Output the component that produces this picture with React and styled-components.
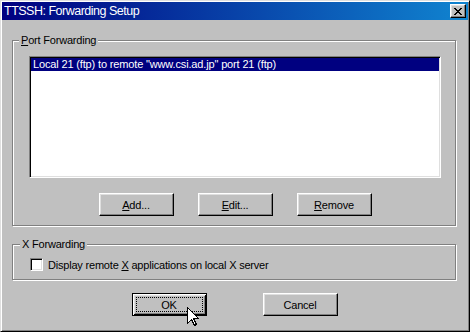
import React from 'react'
import styled, { createGlobalStyle } from 'styled-components'

const colors = {
  face: '#c0c0c0',
  light: '#dfdfdf',
  white: '#ffffff',
  shadow: '#808080',
  dark: '#000000',
  navy: '#000080',
  titleEnd: '#1084d0'
}

const GlobalStyle = createGlobalStyle`
  html, body {
    margin: 0;
    padding: 0;
    background: ${colors.face};
  }
  body {
    font-family: "Liberation Sans", Arial, sans-serif;
    font-size: 11px;
    color: #000;
  }
`

const Window = styled.div`
  position: relative;
  width: 470px;
  height: 332px;
  box-sizing: border-box;
  padding: 1px;
  background: ${colors.face};
  border: 1px solid;
  border-color: ${colors.light} ${colors.dark} ${colors.dark} ${colors.light};
  box-shadow: inset 1px 1px ${colors.white}, inset -1px -1px ${colors.shadow};
  display: flex;
  flex-direction: column;
`

const TitleBar = styled.div`
  height: 18px;
  display: flex;
  align-items: center;
  justify-content: space-between;
  padding: 0 2px 0 2px;
  background: linear-gradient(90deg, ${colors.navy}, ${colors.titleEnd});
`

const Title = styled.span`
  color: ${colors.white};
  font-size: 12.5px;
  letter-spacing: -0.5px;
  line-height: 18px;
  white-space: nowrap;
`

const CloseButton = styled.div`
  width: 16px;
  height: 14px;
  box-sizing: border-box;
  background: ${colors.face};
  border: 1px solid;
  border-color: ${colors.white} ${colors.dark} ${colors.dark} ${colors.white};
  box-shadow: inset -1px -1px ${colors.shadow}, inset 1px 1px ${colors.light};
  display: flex;
  align-items: center;
  justify-content: center;
`

const Body = styled.div`
  flex: 1;
  display: flex;
  flex-direction: column;
  padding: 0 12px 0 10px;
`

const Group = styled.fieldset`
  margin: ${({ top }) => top}px 0 0 0;
  padding: ${({ pad }) => pad};
  min-width: 0;
  border: 1px solid ${colors.shadow};
  box-shadow: inset 1px 1px ${colors.white}, 1px 1px ${colors.white};
`

const GroupLabel = styled.legend`
  margin-left: -10px;
  padding: 0 2px;
  font-size: 11px;
  line-height: 13px;
  letter-spacing: -0.2px;
  background: ${colors.face};
`

const ListBox = styled.div`
  height: 122px;
  box-sizing: border-box;
  background: ${colors.white};
  border: 1px solid;
  border-color: ${colors.shadow} ${colors.white} ${colors.white} ${colors.shadow};
  box-shadow: inset 1px 1px ${colors.dark}, inset -1px -1px ${colors.light};
  padding: 1px;
`

const ListItem = styled.div`
  height: 13px;
  line-height: 13px;
  padding-left: 2px;
  letter-spacing: -0.15px;
  white-space: nowrap;
  ${({ selected }) =>
    selected &&
    `
    background: ${colors.navy};
    color: ${colors.white};
  `}
`

const ButtonRow = styled.div`
  display: flex;
  justify-content: center;
  gap: ${({ gap }) => gap}px;
  margin-top: ${({ top }) => top}px;
  padding-left: ${({ shift }) => shift || 0}px;
`

const Button = styled.div`
  position: relative;
  width: 75px;
  height: 23px;
  box-sizing: border-box;
  display: flex;
  align-items: center;
  justify-content: center;
  background: ${colors.face};
  font-size: 11px;
  letter-spacing: -0.2px;
  border: 1px solid;
  border-color: ${colors.white} ${colors.dark} ${colors.dark} ${colors.white};
  box-shadow: inset -1px -1px ${colors.shadow}, inset 1px 1px ${colors.light};
  ${({ isDefault }) =>
    isDefault &&
    `
    border-color: ${colors.dark};
    box-shadow: inset 1px 1px ${colors.white}, inset -1px -1px ${colors.dark},
      inset 2px 2px ${colors.light}, inset -2px -2px ${colors.shadow};
  `}
`

const FocusRing = styled.span`
  position: absolute;
  inset: 3px;
  border: 1px dotted ${colors.dark};
`

const Mnemonic = styled.span`
  text-decoration: underline;
`

const CheckRow = styled.label`
  display: flex;
  align-items: center;
  gap: 5px;
  height: 13px;
  letter-spacing: -0.2px;
  white-space: nowrap;
`

const CheckBox = styled.span`
  width: 13px;
  height: 13px;
  box-sizing: border-box;
  background: ${colors.white};
  border: 1px solid;
  border-color: ${colors.shadow} ${colors.white} ${colors.white} ${colors.shadow};
  box-shadow: inset 1px 1px ${colors.dark}, inset -1px -1px ${colors.light};
`

const Cursor = styled.svg`
  position: absolute;
  left: 186px;
  top: 306px;
`

const App = () => (
  <>
    <GlobalStyle />
    <Window>
      <TitleBar>
        <Title>TTSSH: Forwarding Setup</Title>
        <CloseButton>
          <svg width="8" height="7" viewBox="0 0 8 7" shapeRendering="crispEdges">
            <path
              d="M0 0h2v1h-2zM6 0h2v1h-2zM1 1h2v1h-2zM5 1h2v1h-2zM2 2h4v1h-4zM3 3h2v1h-2zM2 4h4v1h-4zM1 5h2v1h-2zM5 5h2v1h-2zM0 6h2v1h-2zM6 6h2v1h-2z"
              fill="#000"
            />
          </svg>
        </CloseButton>
      </TitleBar>
      <Body>
        <Group top={14} pad="9px 14px 9px 16px">
          <GroupLabel>
            <Mnemonic>P</Mnemonic>ort Forwarding
          </GroupLabel>
          <ListBox>
            <ListItem selected>
              Local 21 (ftp) to remote "www.csi.ad.jp" port 21 (ftp)
            </ListItem>
          </ListBox>
          <ButtonRow gap={24} top={15}>
            <Button>
              <span>
                <Mnemonic>A</Mnemonic>dd...
              </span>
            </Button>
            <Button>
              <span>
                <Mnemonic>E</Mnemonic>dit...
              </span>
            </Button>
            <Button>
              <span>
                <Mnemonic>R</Mnemonic>emove
              </span>
            </Button>
          </ButtonRow>
        </Group>
        <Group top={12} pad="7px 14px 8px 17px">
          <GroupLabel>X Forwarding</GroupLabel>
          <CheckRow>
            <CheckBox />
            <span>
              Display remote <Mnemonic>X</Mnemonic> applications on local X server
            </span>
          </CheckRow>
        </Group>
        <ButtonRow gap={56} top={13} shift={1}>
          <Button isDefault>
            <FocusRing />
            <span>OK</span>
          </Button>
          <Button>
            <span>Cancel</span>
          </Button>
        </ButtonRow>
      </Body>
      <Cursor width="12" height="20" viewBox="0 0 12 20" shapeRendering="crispEdges">
        <path
          d="M0.5 0.5 L0.5 16.5 L4.5 12.5 L7.5 18.5 L9.5 17.5 L6.5 11.5 L11.5 11.5 Z"
          fill="#fff"
          stroke="#000"
          strokeWidth="1"
        />
      </Cursor>
    </Window>
  </>
)

export default App
